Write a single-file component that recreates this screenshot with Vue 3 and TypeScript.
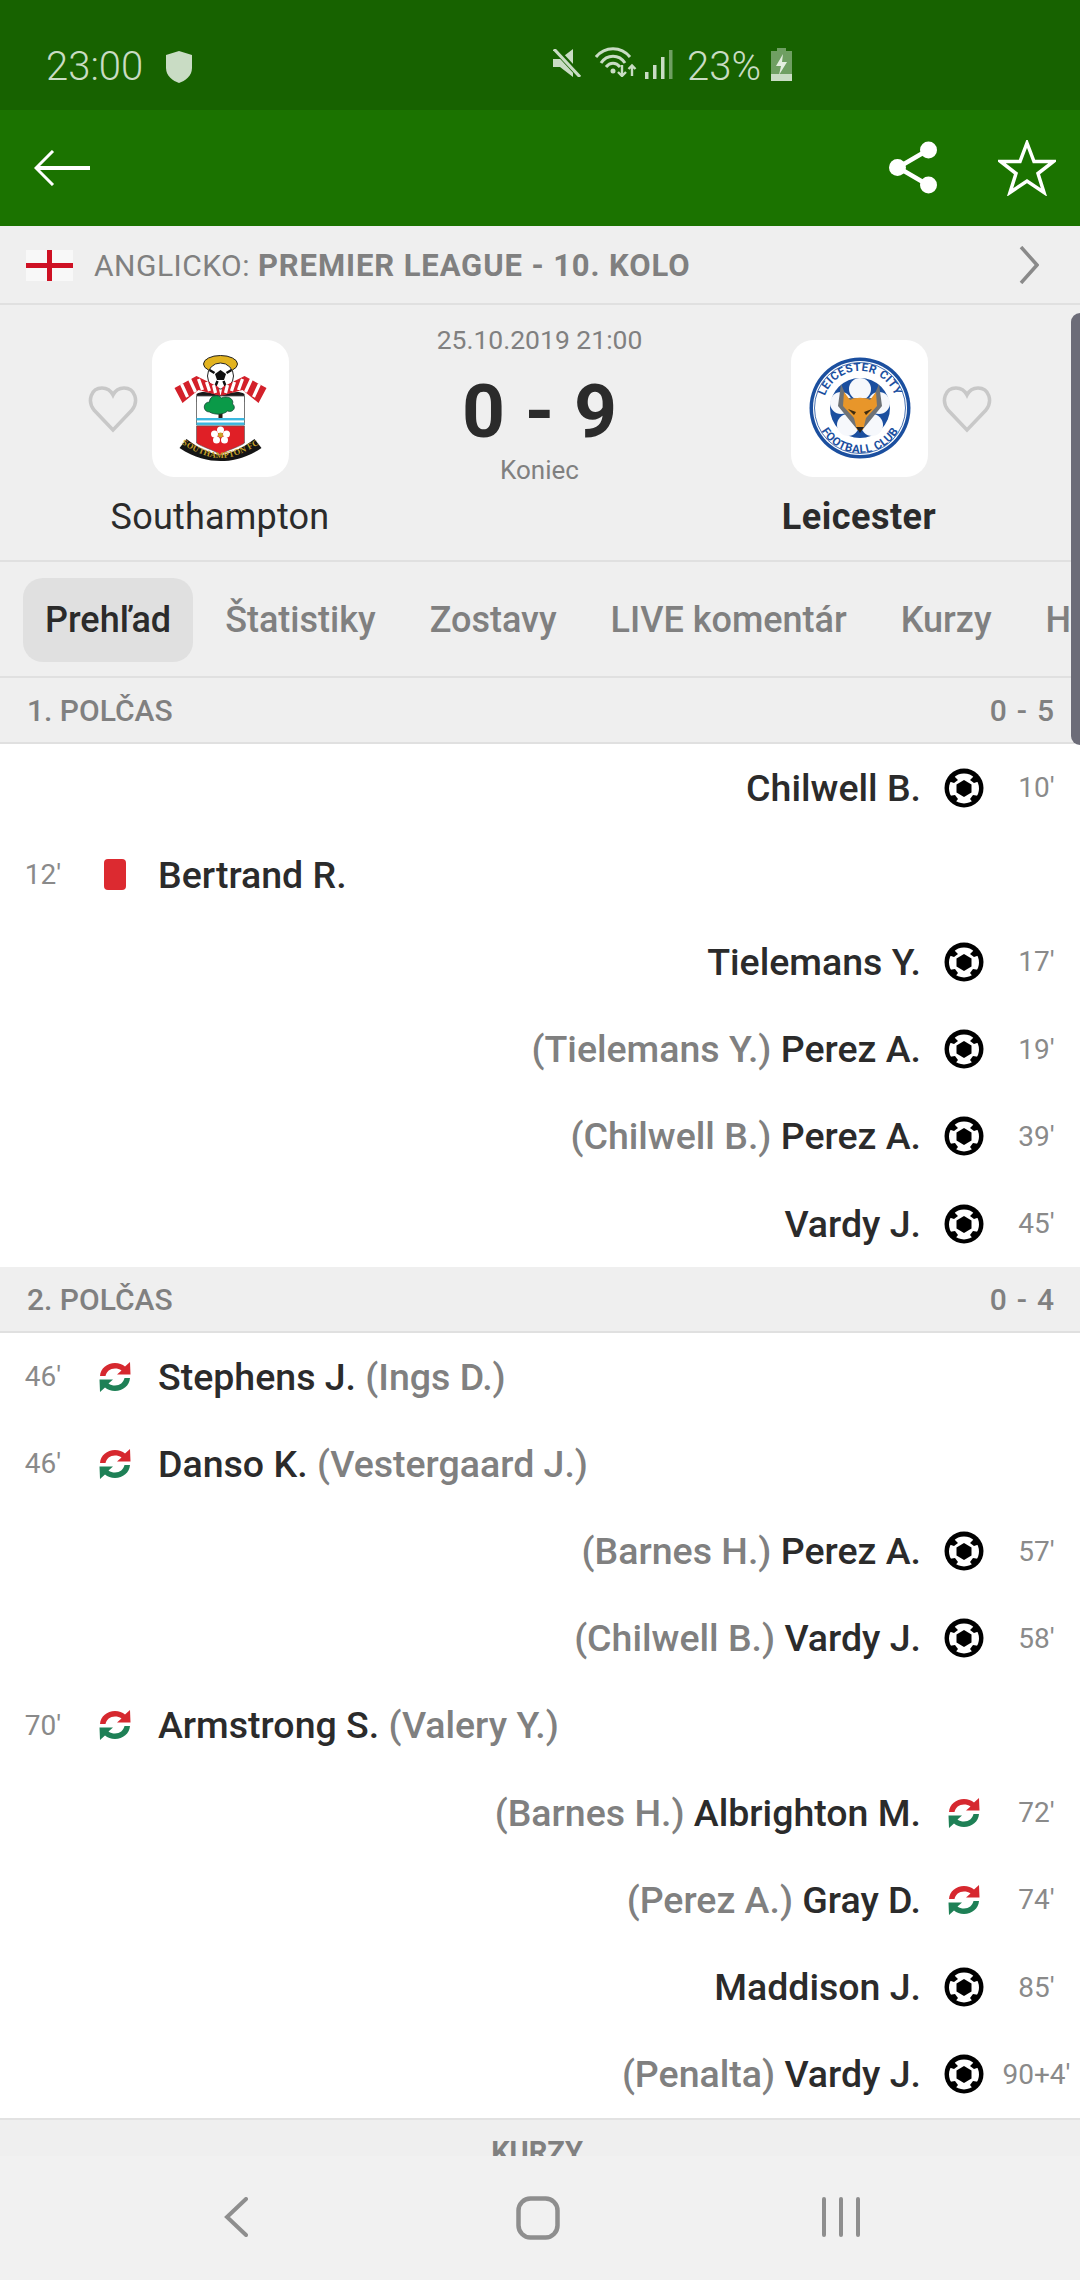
<script setup lang="ts">
interface Ev { side: 'l' | 'r'; time: string; icon: 'ball' | 'red' | 'sub'; name: string; extra?: string }
const first: Ev[] = [
  { side: 'r', time: "10'", icon: 'ball', name: 'Chilwell B.' },
  { side: 'l', time: "12'", icon: 'red', name: 'Bertrand R.' },
  { side: 'r', time: "17'", icon: 'ball', name: 'Tielemans Y.' },
  { side: 'r', time: "19'", icon: 'ball', name: 'Perez A.', extra: '(Tielemans Y.)' },
  { side: 'r', time: "39'", icon: 'ball', name: 'Perez A.', extra: '(Chilwell B.)' },
  { side: 'r', time: "45'", icon: 'ball', name: 'Vardy J.' },
]
const second: Ev[] = [
  { side: 'l', time: "46'", icon: 'sub', name: 'Stephens J.', extra: '(Ings D.)' },
  { side: 'l', time: "46'", icon: 'sub', name: 'Danso K.', extra: '(Vestergaard J.)' },
  { side: 'r', time: "57'", icon: 'ball', name: 'Perez A.', extra: '(Barnes H.)' },
  { side: 'r', time: "58'", icon: 'ball', name: 'Vardy J.', extra: '(Chilwell B.)' },
  { side: 'l', time: "70'", icon: 'sub', name: 'Armstrong S.', extra: '(Valery Y.)' },
  { side: 'r', time: "72'", icon: 'sub', name: 'Albrighton M.', extra: '(Barnes H.)' },
  { side: 'r', time: "74'", icon: 'sub', name: 'Gray D.', extra: '(Perez A.)' },
  { side: 'r', time: "85'", icon: 'ball', name: 'Maddison J.' },
  { side: 'r', time: "90+4'", icon: 'ball', name: 'Vardy J.', extra: '(Penalta)' },
]
const sections = [
  { title: '1. POLČAS', score: '0 - 5', events: first },
  { title: '2. POLČAS', score: '0 - 4', events: second },
]
const tabs = ['Prehľad', 'Štatistiky', 'Zostavy', 'LIVE komentár', 'Kurzy', 'H2H']
</script>

<template>
  <div class="page">
    <div class="status">
      <span class="clock">23:00</span>
      <svg class="shield" viewBox="0 0 26 32"><path d="M13 0 L26 4 V17 C26 25 19 30 13 32 C7 30 0 25 0 17 V4 Z" fill="#c9dcc4" /></svg>
      <div class="status-right">
        <svg class="st-mute" viewBox="0 0 28 28">
          <path d="M0 10 H7 L20 0 V28 L7 18 H0 Z" fill="#c9dcc4" />
          <path d="M2 0 L28 28" stroke="#176200" stroke-width="6" />
          <path d="M1 0 L27 28" stroke="#c9dcc4" stroke-width="3" />
        </svg>
        <svg class="st-wifi" viewBox="0 0 42 30" fill="none" stroke="#c9dcc4" stroke-width="3">
          <path d="M1 10 C10 -1 26 -1 35 10" />
          <path d="M6 16 C12 7 24 7 30 16" />
          <path d="M11 20 C15 15 21 15 25 20" />
          <circle cx="18" cy="24" r="2.500" fill="#c9dcc4" stroke="none" />
          <path d="M27 18 V29 M23 25 L27 29 L31 25" stroke-width="2.400" />
          <path d="M37 29 V19 M33.500 22 L37 18.500 L40.500 22" stroke-width="2.400" />
        </svg>
        <svg class="st-signal" viewBox="0 0 28 30">
          <rect x="0" y="22" width="3.500" height="7" fill="#c9dcc4" />
          <rect x="8" y="15" width="3.500" height="14" fill="#c9dcc4" />
          <rect x="16" y="7" width="3.500" height="22" fill="#c9dcc4" />
          <rect x="24" y="0" width="3.500" height="29" fill="#6f9f62" />
        </svg>
        <span class="pct">23%</span>
        <svg class="st-batt" viewBox="0 0 21 33">
          <path d="M6 0 H15 V3 H21 V33 H0 V3 H6 Z" fill="#6f9f62" />
          <rect x="0" y="26" width="21" height="7" fill="#c9dcc4" />
          <path d="M12 6 L5 18 H10 L8 27 L16 14 H11 Z" fill="#e4eee0" />
        </svg>
      </div>
    </div>

    <div class="appbar">
      <svg class="ic-back" viewBox="0 0 56 36" fill="none" stroke="#fff">
        <path d="M56 18 H3" stroke-width="4" />
        <path d="M19 1 L2 18 L19 35" stroke-width="3" />
      </svg>
      <svg class="ic-share" viewBox="0 0 48 53">
        <path d="M39 9 L9 26.500 L39 44" fill="none" stroke="#fff" stroke-width="4.500" />
        <circle cx="39.500" cy="9" r="8.500" fill="#fff" />
        <circle cx="8.500" cy="26.500" r="8.500" fill="#fff" />
        <circle cx="39.500" cy="44" r="8.500" fill="#fff" />
      </svg>
      <svg class="ic-star" viewBox="0 0 58 56">
        <path d="M29 3 L36 21.500 L55.500 21.500 L40 33.500 L46 52.500 L29 41 L12 52.500 L18 33.500 L2.500 21.500 L22 21.500 Z" fill="none" stroke="#fff" stroke-width="3.500" stroke-linejoin="miter" />
      </svg>
    </div>

    <div class="league">
      <svg class="flag" viewBox="0 0 47 31">
        <rect width="47" height="31" fill="#f8f8f8" />
        <rect x="0" y="13" width="47" height="5" fill="#ce1124" />
        <rect x="21" y="0" width="5" height="31" fill="#ce1124" />
      </svg>
      <span class="league-text">ANGLICKO: <b>PREMIER LEAGUE - 10. KOLO</b></span>
      <svg class="league-chev" viewBox="0 0 20 38" fill="none" stroke="#8a8a8a" stroke-width="3.500"><path d="M2 1 L18 19 L2 37" /></svg>
    </div>

    <div class="match">
      <div class="team">
        <div class="logo-row">
          <svg class="heart heart-l" viewBox="0 0 50 48"><path d="M25 45 L6 25 C-1 16 3 3 14 3 C19 3 23 6 25 10 C27 6 31 3 36 3 C47 3 51 16 44 25 Z" fill="none" stroke="#c8c8c8" stroke-width="3.500" /></svg>
          <div class="logo">
            <svg viewBox="-2.500 0 137 137" class="crest">
              <ellipse cx="66" cy="24" rx="17" ry="8.500" fill="#e2b31f" stroke="#222" stroke-width="1" />
              <circle cx="66" cy="36" r="13" fill="#fff" stroke="#222" stroke-width="1" />
              <path d="M66 30 L71.500 34 L69.500 40 L62.500 40 L60.500 34 Z" fill="#111" />
              <path d="M55 30 L60 33 M77 30 L72 33 M61 46 L63 41 M71 46 L69 41" stroke="#111" stroke-width="2.500" />
              <path d="M42 54 C50 49 60 55 66 55 C72 55 82 49 90 54 L90 62 H42 Z" fill="#1a1a1a" />
              <path d="M20 48 L42 36 L64 47 L66 56 L44 50 L28 63 Z" fill="#d3202a" />
              <path d="M112 48 L90 36 L68 47 L66 56 L88 50 L104 63 Z" fill="#d3202a" />
              <path d="M27 44 L33 57 M35 39 L41 52 M44 39 L48 50 M52 42 L55 51 M59 45 L61 53 M105 44 L99 57 M97 39 L91 52 M88 39 L84 50 M80 42 L77 51 M73 45 L71 53" stroke="#fff" stroke-width="3.200" />
              <path d="M42 56 H90 V85 H42 Z" fill="#fff" stroke="#555" stroke-width="0.800" />
              <rect x="64" y="68" width="4" height="11" fill="#2a1a10" />
              <path d="M55 72 C48 72 48 62 55 62 C55 55 64 54 67 58 C73 55 80 59 78 64 C82 67 79 73 73 71 C69 75 60 75 55 72 Z" fill="#0a9a48" stroke="#143" stroke-width="0.800" />
              <rect x="42" y="78" width="48" height="2.400" fill="#3bb7e0" />
              <rect x="42" y="82.500" width="48" height="2.400" fill="#3bb7e0" />
              <path d="M42 86 H90 V103 C85 107 72 110 66 115 C60 110 47 107 42 103 Z" fill="#e01f26" stroke="#555" stroke-width="0.600" />
              <g fill="#fff">
                <circle cx="66" cy="90" r="3.500" /><circle cx="72" cy="94" r="3.500" /><circle cx="70" cy="100" r="3.500" />
                <circle cx="62" cy="100" r="3.500" /><circle cx="60" cy="94" r="3.500" />
              </g>
              <circle cx="66" cy="95" r="2.500" fill="#c9a227" />
              <path d="M32 99 C44 108 56 114 66 115 C76 114 88 108 100 99 L107 108 C92 118 78 121 66 121 C54 121 40 118 25 108 Z" fill="#151515" />
              <path id="sfc-arc" d="M29 105 C44 114 56 118 66 118 C76 118 88 114 103 105" fill="none" />
              <text class="crest-sfc"><textPath href="#sfc-arc" startOffset="50%" text-anchor="middle">SOUTHAMPTON FC</textPath></text>
            </svg>
          </div>
          <span></span>
        </div>
        <div class="team-name">Southampton</div>
      </div>

      <div class="center">
        <div class="date">25.10.2019 21:00</div>
        <div class="score">0 - 9</div>
        <div class="state">Koniec</div>
      </div>

      <div class="team">
        <div class="logo-row">
          <span></span>
          <div class="logo">
            <svg viewBox="-3 0 137 137" class="crest">
              <circle cx="66" cy="68" r="50.500" fill="#1b4f9f" />
              <circle cx="66" cy="68" r="47" fill="#fff" />
              <circle cx="66" cy="68" r="45.500" fill="none" stroke="#1b4f9f" stroke-width="0.800" />
              <circle cx="66" cy="68" r="30" fill="#1b4f9f" />
              <path id="lc-top" d="M29 68 A37 37 0 0 1 103 68" fill="none" />
              <path id="lc-bot" d="M21 68 A45 45 0 0 0 111 68" fill="none" />
              <text class="crest-lc"><textPath href="#lc-top" startOffset="50%" text-anchor="middle">LEICESTER CITY</textPath></text>
              <text class="crest-lc"><textPath href="#lc-bot" startOffset="50%" text-anchor="middle">FOOTBALL CLUB</textPath></text>
              <g fill="#f6f8fc">
                <circle cx="66" cy="49" r="11" /><circle cx="85" cy="63" r="11" /><circle cx="78" cy="85" r="11" />
                <circle cx="54" cy="85" r="11" /><circle cx="47" cy="63" r="11" />
              </g>
              <path d="M47 44 L53 58 L79 58 L85 44 L88 66 L70 88 L66 90 L62 88 L44 66 Z" fill="#6e7276" />
              <path d="M50 52 L56 60 C62 57 70 57 76 60 L82 52 L83 66 L72 78 L69 90 H63 L60 78 L49 66 Z" fill="#e8962a" />
              <path d="M54 69 L62 72 L60 75 Z M78 69 L70 72 L72 75 Z" fill="#3d2b10" />
              <path d="M62 87 H70 L66 93 Z" fill="#222" />
            </svg>
          </div>
          <svg class="heart heart-r" viewBox="0 0 50 48"><path d="M25 45 L6 25 C-1 16 3 3 14 3 C19 3 23 6 25 10 C27 6 31 3 36 3 C47 3 51 16 44 25 Z" fill="none" stroke="#c8c8c8" stroke-width="3.500" /></svg>
        </div>
        <div class="team-name strong">Leicester</div>
      </div>
    </div>

    <div class="tabs">
      <div class="tabs-strip">
        <div v-for="(t, i) in tabs" :key="t" class="tab" :class="{ active: i === 0 }">{{ t }}</div>
      </div>
    </div>

    <div class="scroll-thumb"></div>

    <template v-for="s in sections" :key="s.title">
      <div class="sec">
        <span>{{ s.title }}</span>
        <span class="sec-score">{{ s.score }}</span>
      </div>
      <div class="events">
        <div v-for="(e, i) in s.events" :key="i" class="ev" :class="e.side">
          <span class="time">{{ e.time }}</span>
          <span class="icon">
            <svg v-if="e.icon === 'ball'" class="ball" viewBox="0 0 40 40">
              <circle cx="20" cy="20" r="19.500" fill="#000" />
              <circle cx="20" cy="20.500" r="15" fill="#fff" />
              <path d="M9 7 L14 12 L10 15 L4 13 Z M31 7 L26 12 L30 15 L36 13 Z" fill="#000" />
              <path d="M5 28 L11 27 L14 31 L10 36 Z M35 28 L29 27 L26 31 L30 36 Z" fill="#000" />
              <path d="M20 12 L27.500 16.500 L27.500 24.500 L20 29 L12.500 24.500 L12.500 16.500 Z" fill="#000" />
            </svg>
            <span v-else-if="e.icon === 'red'" class="redcard"></span>
            <svg v-else class="sub" viewBox="0 0 32 32">
              <path d="M1 15 C1.500 7.500 8 2 16 2 C20 2 23.500 3.500 26 5.500 L31 1 L31.500 13.500 L18 13.500 L22.500 9.500 C20.500 8 18.500 7.500 16 7.500 C11 7.500 7.500 10.500 6.500 15 Z" fill="#d6282f" />
              <path d="M31 17 C30.500 24.500 24 30 16 30 C12 30 8.500 28.500 6 26.500 L1 31 L0.500 18.500 L14 18.500 L9.500 22.500 C11.500 24 13.500 24.500 16 24.500 C21 24.500 24.500 21.500 25.500 17 Z" fill="#1e8056" />
            </svg>
          </span>
          <span class="who">
            <template v-if="e.side === 'l'"><span class="nm">{{ e.name }}</span><span v-if="e.extra" class="ex">{{ ' ' + e.extra }}</span></template>
            <template v-else><span v-if="e.extra" class="ex">{{ e.extra + ' ' }}</span><span class="nm">{{ e.name }}</span></template>
          </span>
        </div>
      </div>
    </template>

    <div class="spacer"></div>
    <div class="bottom"><span class="bottom-label">KURZY</span></div>
    <div class="nav">
      <svg class="nav-back" viewBox="0 0 24 40" fill="none" stroke="#8e8e8e" stroke-width="4" stroke-linecap="round"><path d="M22 2 L3 20 L22 38" /></svg>
      <svg class="nav-home" viewBox="0 0 44 44" fill="none" stroke="#8e8e8e" stroke-width="4.500"><rect x="2.500" y="2.500" width="39" height="39" rx="12" /></svg>
      <svg class="nav-recent" viewBox="0 0 38 40" fill="none" stroke="#8e8e8e" stroke-width="4" stroke-linecap="round"><path d="M2 2 V38 M19 2 V38 M36 2 V38" /></svg>
    </div>
  </div>
</template>

<style>
html, body { margin: 0; padding: 0; background: #fff; }
</style>

<style scoped>
.page {
  position: relative;
  width: 1080px;
  height: 2280px;
  overflow: hidden;
  display: flex;
  flex-direction: column;
  background: #fff;
  font-family: Roboto, "Liberation Sans", sans-serif;
  color: #2b2b2b;
}
.status {
  height: 110px;
  flex: none;
  background: #176200;
  color: #c9dcc4;
  display: flex;
  align-items: center;
  padding: 0 0 0 46px;
  box-sizing: border-box;
  position: relative;
}
.clock { font-size: 40px; font-weight: 300; width: 120px; margin-top: 24px; line-height: 40px; }
.shield { width: 26px; height: 32px; margin-top: 24px; }
.status-right { display: flex; align-items: flex-start; margin-left: 361px; margin-top: 18px; height: 40px; }
.st-mute { width: 28px; height: 28px; margin-top: 5px; }
.st-wifi { width: 42px; height: 30px; margin: 3px 0 0 14px; }
.st-signal { width: 28px; height: 30px; margin: 6px 0 0 8px; }
.pct { font-size: 40px; font-weight: 300; line-height: 40px; margin: 3px 0 0 14px; }
.st-batt { width: 21px; height: 33px; margin: 4px 0 0 10px; }
.appbar {
  height: 116px;
  flex: none;
  background: #1b7300;
  display: flex;
  align-items: center;
  padding: 0 24px 0 34px;
  box-sizing: border-box;
}
.ic-back { width: 56px; height: 36px; margin-right: auto; margin-top: -1px; }
.ic-share { width: 48px; height: 53px; margin-top: -1px; }
.ic-star { width: 58px; height: 56px; margin-left: 61px; margin-top: -1px; }
.league {
  height: 79px;
  flex: none;
  background: #efefef;
  border-bottom: 2px solid #e0e0e0;
  box-sizing: border-box;
  display: flex;
  align-items: center;
  padding: 0 41px 0 26px;
}
.flag { width: 47px; height: 31px; margin-top: 1px; }
.league-text { font-size: 30px; color: #808080; margin-left: 21px; flex: 1; letter-spacing: 0.5px; white-space: nowrap; padding-top: 2px; }
.league-text b { font-weight: 700; font-size: 31px; letter-spacing: 0.9px; }
.league-chev { width: 20px; height: 38px; }
.match {
  height: 257px;
  flex: none;
  background: #efefef;
  border-bottom: 2px solid #e0e0e0;
  box-sizing: border-box;
  display: flex;
  padding: 35px 51px 0 50px;
}
.team { width: 340px; flex: none; display: flex; flex-direction: column; align-items: center; }
.logo-row { display: grid; grid-template-columns: 1fr 137px 1fr; column-gap: 13px; align-items: center; width: 100%; }
.logo { width: 137px; height: 137px; background: #fff; border-radius: 22px; }
.crest { display: block; width: 137px; height: 137px; }
.heart { width: 52px; height: 48px; }
.heart-l { justify-self: end; }
.heart-r { justify-self: start; }
.team-name { font-size: 36px; line-height: 44px; margin-top: 18px; color: #2b2b2b; letter-spacing: 0.2px; }
.team-name.strong { font-weight: 700; letter-spacing: 0.5px; }
.center { flex: 1; display: flex; flex-direction: column; align-items: center; margin-top: -18px; }
.date { font-size: 26.5px; line-height: 36px; color: #808080; }
.score { font-size: 75px; font-weight: 700; line-height: 90px; margin-top: 8px; color: #2b2b2b; word-spacing: 1px; }
.state { font-size: 26px; line-height: 34px; color: #808080; margin-top: -3px; }
.tabs {
  height: 116px;
  flex: none;
  background: #efefef;
  border-bottom: 2px solid #e0e0e0;
  box-sizing: border-box;
  display: flex;
  align-items: center;
}
.tabs-strip {
  width: 1070px;
  display: flex;
  gap: 10px;
  padding: 1px 0 0 23px;
  box-sizing: border-box;
  overflow: hidden;
  font-size: 36px;
  font-weight: 500;
  color: #808080;
  white-space: nowrap;
}
.tab { height: 84px; line-height: 84px; padding: 0 22px; border-radius: 20px; flex: none; }
.tab.active { background: #e0e0e0; color: #2b2b2b; }
.scroll-thumb {
  position: absolute;
  right: 0;
  top: 313px;
  width: 9px;
  height: 432px;
  background: #6c6c78;
  border-radius: 9px 0 0 9px;
}
.sec {
  height: 66px;
  flex: none;
  background: #efefef;
  border-bottom: 2px solid #e0e0e0;
  box-sizing: border-box;
  display: flex;
  align-items: center;
  justify-content: space-between;
  padding: 0 26px 0 27px;
  font-size: 30px;
  font-weight: 500;
  color: #808080;
}
.sec-score { word-spacing: 2.500px; }
.events { flex: none; }
.ev { height: 87.2px; display: flex; align-items: center; white-space: pre; }
.ev.r { flex-direction: row-reverse; }
.time { width: 86px; flex: none; text-align: center; font-size: 28px; color: #8a8a8a; }
.ev.r .time { width: 87px; }
.icon { width: 58px; flex: none; display: flex; justify-content: center; align-items: center; }
.who { font-size: 37.5px; font-weight: 500; margin: 0 14px; }
.ex { color: #808080; }
.nm { color: #2b2b2b; }
.ball { width: 40px; height: 40px; display: block; }
.redcard { width: 22px; height: 31px; background: #dc2a30; border-radius: 4px; display: block; }
.sub { width: 32px; height: 32px; display: block; }
.spacer { flex: 1; }
.bottom {
  height: 38px;
  flex: none;
  background: #efefef;
  border-top: 2px solid #e2e2e2;
  box-sizing: border-box;
  overflow: hidden;
  text-align: center;
}
.bottom-label { display: block; font-size: 29px; font-weight: 700; color: #808080; line-height: 30px; margin-top: 17px; padding-right: 6px; }
.nav {
  height: 125px;
  flex: none;
  background: #f1f1f1;
  display: flex;
  align-items: flex-start;
  position: relative;
  padding: 40px 0 0 224px;
  box-sizing: border-box;
}
.nav-back { width: 24px; height: 40px; margin-top: 1px; }
.nav-home { width: 44px; height: 44px; margin-left: 268px; }
.nav-recent { width: 38px; height: 40px; margin-left: 262px; margin-top: 1px; }
.crest-sfc { font-family: "Liberation Serif", serif; font-size: 8.5px; font-weight: 700; fill: #c9a227; letter-spacing: 0.2px; }
.crest-lc { font-family: Roboto, sans-serif; font-size: 11.5px; font-weight: 700; fill: #1b4f9f; letter-spacing: 0.4px; }
</style>
